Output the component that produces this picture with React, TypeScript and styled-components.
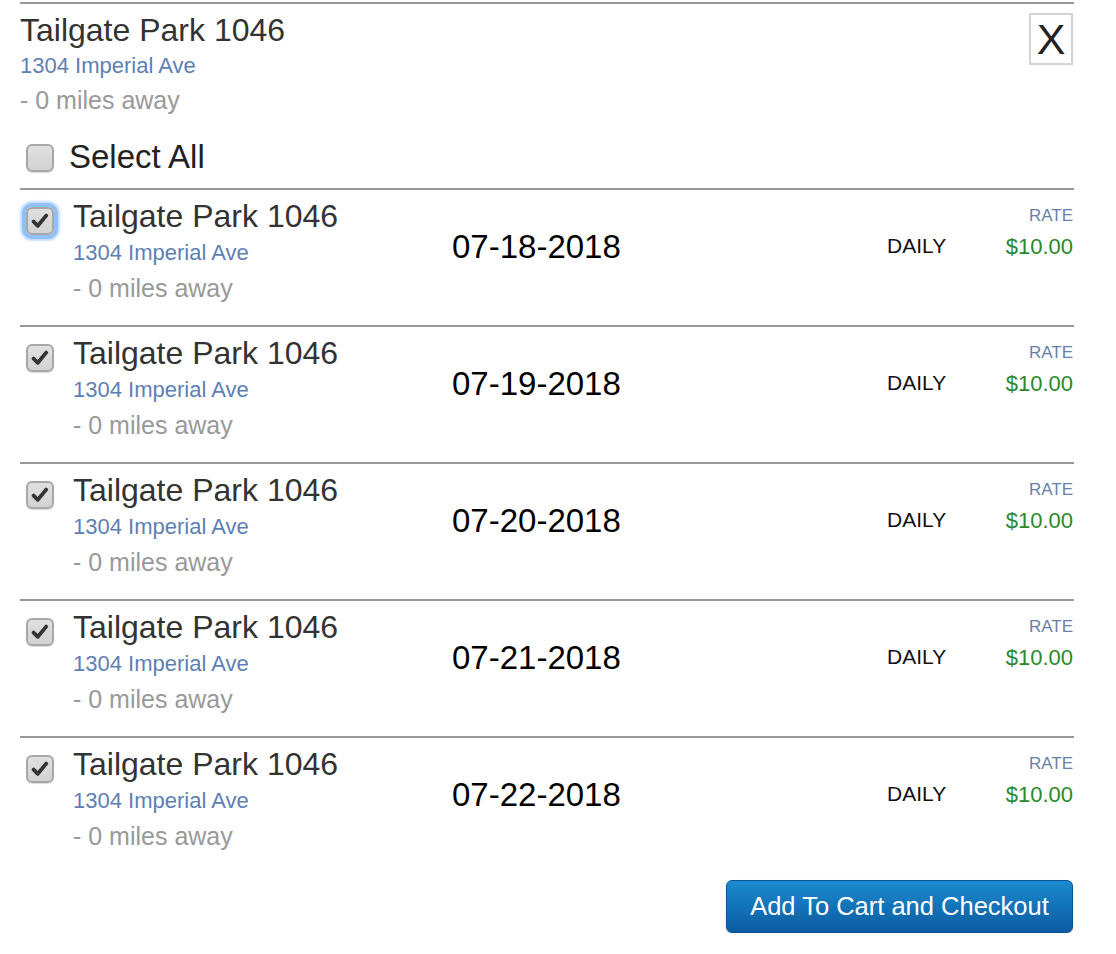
import { ReactElement } from "react";
import styled, { createGlobalStyle } from "styled-components";

const DATES = ["07-18-2018", "07-19-2018", "07-20-2018", "07-21-2018", "07-22-2018"];

const PLACE = {
  name: "Tailgate Park 1046",
  address: "1304 Imperial Ave",
  distance: "- 0 miles away",
};

function Checkbox(props: { checked?: boolean; focused?: boolean }): ReactElement {
  return (
    <Box $focused={!!props.focused}>
      {props.checked && (
        <svg width="18" height="18" viewBox="0 0 18 18">
          <path
            d="M2.6 9.6 L6.8 13.8 L15.2 3.6"
            fill="none"
            stroke="#333"
            strokeWidth="3.8"
            strokeLinecap="round"
            strokeLinejoin="round"
          />
        </svg>
      )}
    </Box>
  );
}

function PlaceInfo(props: { gap: number }): ReactElement {
  return (
    <Info $gap={props.gap}>
      <Name>{PLACE.name}</Name>
      <Address>{PLACE.address}</Address>
      <Distance>{PLACE.distance}</Distance>
    </Info>
  );
}

export default function App(): ReactElement {
  return (
    <>
      <GlobalStyle />
      <Panel>
        <Header>
          <PlaceInfo gap={2} />
          <CloseButton>X</CloseButton>
        </Header>
        <SelectAllRow>
          <Checkbox />
          <SelectAllLabel>Select All</SelectAllLabel>
        </SelectAllRow>
        {DATES.map((date, index) => (
          <Row key={date}>
            <RowInfo>
              <Checkbox checked focused={index === 0} />
              <PlaceInfo gap={3} />
            </RowInfo>
            <DateText>{date}</DateText>
            <Frequency>DAILY</Frequency>
            <RateCell>
              <RateLabel>RATE</RateLabel>
              <RateValue>$10.00</RateValue>
            </RateCell>
          </Row>
        ))}
        <Footer>
          <CheckoutButton>Add To Cart and Checkout</CheckoutButton>
        </Footer>
      </Panel>
    </>
  );
}

const GlobalStyle = createGlobalStyle`
  body {
    margin: 0;
    background: #fff;
    font-family: "Liberation Sans", Arial, Helvetica, sans-serif;
  }
`;

const Panel = styled.div`
  margin: 2px 0 0 20px;
  width: 1054px;
  border-top: 2px solid #999;
`;

const Header = styled.div`
  display: flex;
  justify-content: space-between;
  align-items: flex-start;
  padding: 8px 1px 0 0;
`;

const CloseButton = styled.button`
  box-sizing: border-box;
  width: 44px;
  height: 52px;
  margin-top: 1px;
  padding: 0;
  border: 2px solid #d4d4d4;
  background: #fff;
  color: #222;
  font-family: "Liberation Sans", Arial, sans-serif;
  font-size: 43px;
  line-height: 48px;
  cursor: pointer;
`;

const Info = styled.div<{ $gap: number }>`
  display: flex;
  flex-direction: column;
  gap: ${(p) => p.$gap}px;
`;

const Name = styled.div`
  font-size: 32px;
  line-height: 36px;
  color: #333;
`;

const Address = styled.div`
  font-size: 22px;
  line-height: 31px;
  color: #5d7fb4;
`;

const Distance = styled.div`
  font-size: 25px;
  line-height: 35px;
  color: #999;
`;

const SelectAllRow = styled.div`
  display: flex;
  align-items: flex-start;
  gap: 15px;
  margin-top: 19px;
  padding: 0 0 13px 6px;
`;

const SelectAllLabel = styled.div`
  margin-top: 2px;
  font-size: 33px;
  line-height: 36px;
  color: #222;
`;

const Box = styled.span<{ $focused: boolean }>`
  box-sizing: border-box;
  flex: none;
  display: flex;
  align-items: center;
  justify-content: center;
  width: 28px;
  height: 28px;
  margin-top: 7px;
  border: 2px solid #a8a8a8;
  border-radius: 6px;
  background: linear-gradient(#e0e0e0, #d2d2d2);
  box-shadow: ${(p) =>
    p.$focused
      ? "0 0 0 4px #8fc0f7, 0 0 2px 6px rgba(150, 195, 250, 0.55)"
      : "0 1px 1px rgba(0, 0, 0, 0.15)"};
`;

const Row = styled.div`
  display: grid;
  grid-template-columns: 426px 435px 1fr auto;
  align-items: start;
  border-top: 2px solid #999;
  padding: 8px 1px 19px 6px;
`;

const RowInfo = styled.div`
  display: flex;
  align-items: flex-start;
  gap: 19px;

  & > span {
    margin-top: 9px;
  }
`;

const DateText = styled.div`
  margin-top: 30px;
  font-size: 33px;
  line-height: 38px;
  color: #000;
`;

const Frequency = styled.div`
  margin-top: 36px;
  font-size: 21px;
  line-height: 24px;
  color: #111;
`;

const RateCell = styled.div`
  display: flex;
  flex-direction: column;
  align-items: flex-end;
  margin-top: 8px;
`;

const RateLabel = styled.div`
  font-size: 17px;
  line-height: 20px;
  color: #6b80a8;
`;

const RateValue = styled.div`
  margin-top: 8px;
  font-size: 22px;
  line-height: 26px;
  color: #2a8a2a;
`;

const Footer = styled.div`
  display: flex;
  justify-content: flex-end;
  margin-top: 7px;
  padding-right: 1px;
`;

const CheckoutButton = styled.button`
  box-sizing: border-box;
  width: 347px;
  height: 53px;
  border: 1px solid #0b5596;
  border-radius: 6px;
  background: linear-gradient(#1b8bcf, #0c5ba0);
  box-shadow: 0 1px 2px rgba(0, 0, 0, 0.2);
  color: #fff;
  font-family: "Liberation Sans", Arial, sans-serif;
  font-size: 25.5px;
  cursor: pointer;
`;
